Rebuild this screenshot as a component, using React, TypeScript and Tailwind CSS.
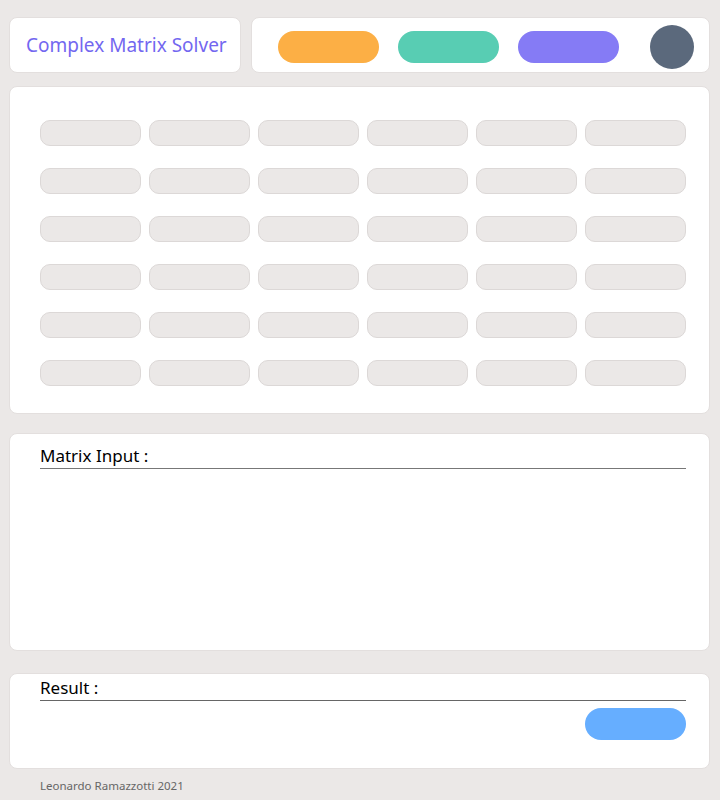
import React from "react";

const font = { fontFamily: '"Segoe UI", "Noto Sans", "Open Sans", sans-serif' };

export default function App() {
  const rows = Array.from({ length: 6 });
  const cols = Array.from({ length: 6 });
  return (
    <div className="min-h-[800px] w-[720px] bg-[#ebe8e7] pl-[9px] pr-[10px] pt-[17px]" style={font}>
      <div className="flex h-[56px] gap-[10px]">
        <div className="flex w-[232px] items-center rounded-[8px] border border-[#e3dfde] bg-white pl-[16px]">
          <span className="text-[19px] text-[#7367f0]">Complex Matrix Solver</span>
        </div>
        <div className="flex flex-1 items-center rounded-[8px] border border-[#e3dfde] bg-white pl-[26px] pt-[4px]">
          <div className="h-[32px] w-[101px] rounded-full bg-[#fcaf45]" />
          <div className="ml-[19px] h-[32px] w-[101px] rounded-full bg-[#58cdb3]" />
          <div className="ml-[19px] h-[32px] w-[101px] rounded-full bg-[#857bf5]" />
          <div className="ml-[31px] h-[44px] w-[44px] rounded-full bg-[#5b697c]" />
        </div>
      </div>

      <div className="mt-[13px] rounded-[8px] border border-[#e3dfde] bg-white pb-[27px] pl-[30px] pr-[23px] pt-[33px]">
        <div className="flex flex-col gap-[22px]">
          {rows.map((_, r) => (
            <div key={r} className="flex gap-[8px]">
              {cols.map((_, c) => (
                <div
                  key={c}
                  className="h-[26px] w-[101px] rounded-[10px] border border-[#dcd8d7] bg-[#ebe8e7]"
                />
              ))}
            </div>
          ))}
        </div>
      </div>

      <div className="mt-[19px] h-[218px] rounded-[8px] border border-[#e3dfde] bg-white pl-[30px] pr-[23px] pt-[11px]">
        <div className="h-[24px] border-b border-[#777] text-[17px] leading-[22px] text-black">Matrix Input :</div>
      </div>

      <div className="mt-[22px] h-[96px] rounded-[8px] border border-[#e3dfde] bg-white pl-[30px] pr-[23px] pt-[3px]">
        <div className="h-[24px] border-b border-[#666] text-[17px] leading-[22px] text-black">Result :</div>
        <div className="mt-[7px] flex justify-end">
          <div className="h-[32px] w-[101px] rounded-full bg-[#66aeff]" />
        </div>
      </div>

      <div className="pl-[31px] pt-[8px] text-[11.5px] text-[#666]">Leonardo Ramazzotti 2021</div>
    </div>
  );
}
